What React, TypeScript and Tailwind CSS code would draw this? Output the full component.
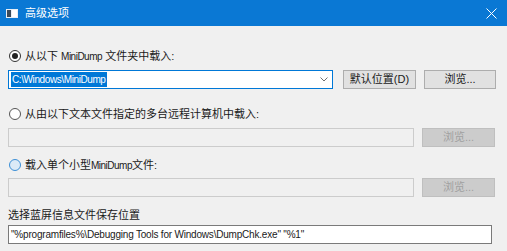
import React from 'react';

const font = { fontFamily: '"Liberation Sans", "Noto Sans CJK SC", sans-serif' };

const Radio = ({ checked, hover }: { checked?: boolean; hover?: boolean }) => (
  <span
    className={`flex h-[12px] w-[12px] shrink-0 items-center justify-center rounded-full border ${
      checked ? 'border-[#333333] bg-white' : hover ? 'border-[#3c8fd6] bg-[#dbeaf7]' : 'border-[#555555] bg-white'
    }`}
  >
    {checked && <span className="h-[6px] w-[6px] rounded-full bg-[#222222]" />}
  </span>
);

const Button = ({ children, disabled, className = '' }: { children: React.ReactNode; disabled?: boolean; className?: string }) => (
  <div
    className={`flex h-[19px] items-center justify-center border text-[11px] ${
      disabled ? 'border-[#bfbfbf] bg-[#cccccc] text-[#a0a0a0]' : 'border-[#adadad] bg-[#e1e1e1] text-[#1a1a1a]'
    } ${className}`}
  >
    {children}
  </div>
);

export default function App() {
  return (
    <div className="h-[251px] w-[507px] overflow-hidden bg-[#f0f0f0] text-[#1a1a1a]" style={font}>
      {/* title bar */}
      <div className="flex h-[26px] items-center bg-[#0a78d4] pl-[6px] pr-[6px] text-white">
        <svg width="12" height="9" viewBox="0 0 12 9" className="shrink-0">
          <rect x="0" y="0" width="12" height="9" fill="#e8eef5" />
          <rect x="1" y="1" width="4" height="7" fill="#3b4a5a" />
          <rect x="6" y="1" width="5" height="7" fill="#ffffff" />
        </svg>
        <span className="ml-[7px] text-[11px]">高级选项</span>
        <svg width="11" height="11" viewBox="0 0 11 11" className="ml-auto mr-[4px]">
          <path d="M0.5 0.5 L10.5 10.5 M10.5 0.5 L0.5 10.5" stroke="#ffffff" strokeWidth="1" />
        </svg>
      </div>

      <div className="pl-[8px] pr-[11px]">
        {/* option 1 */}
        <div className="mt-[22px] flex h-[16px] items-center gap-[4px] pl-[1px] text-[11px]">
          <Radio checked />
          <span>
            从以下 <span className="text-[10px] tracking-[-0.5px]">MiniDump</span> 文件夹中载入:
          </span>
        </div>
        <div className="mt-[6px] flex h-[19px] items-center">
          <div className="flex h-[19px] w-[325px] items-center border border-[#0078d7] bg-white pl-[2px] pr-[4px]">
            <span className="bg-[#0078d7] px-[1px] text-[10px] leading-[15px] tracking-[-0.4px] text-white">C:\Windows\MiniDump</span>
            <svg width="8" height="5" viewBox="0 0 8 5" className="ml-auto">
              <path d="M0.5 0.5 L4 4 L7.5 0.5" stroke="#707070" strokeWidth="1" fill="none" />
            </svg>
          </div>
          <Button className="ml-[10px] w-[73px]">默认位置(D)</Button>
          <Button className="ml-[8px] w-[72px]">浏览...</Button>
        </div>

        {/* option 2 */}
        <div className="mt-[17px] flex h-[16px] items-center gap-[4px] pl-[1px] text-[11px]">
          <Radio />
          <span>从由以下文本文件指定的多台远程计算机中载入:</span>
        </div>
        <div className="mt-[6px] flex h-[19px] items-center">
          <div className="h-[19px] w-[406px] border border-[#cccccc] bg-[#f0f0f0]" />
          <Button disabled className="ml-[8px] w-[73px]">浏览...</Button>
        </div>

        {/* option 3 */}
        <div className="mt-[10px] flex h-[16px] items-center gap-[4px] pl-[1px] text-[11px]">
          <Radio hover />
          <span>
            载入单个小型<span className="text-[10px] tracking-[-0.5px]">MiniDump</span>文件:
          </span>
        </div>
        <div className="mt-[5px] flex h-[19px] items-center">
          <div className="h-[19px] w-[406px] border border-[#cccccc] bg-[#f0f0f0]" />
          <Button disabled className="ml-[8px] w-[73px]">浏览...</Button>
        </div>

        {/* save location */}
        <div className="mt-[10px] flex h-[16px] items-center text-[11px]">选择蓝屏信息文件保存位置</div>
        <div className="mt-[2px] flex h-[19px] w-[484px] items-center border border-[#7a7a7a] bg-white pl-[2px] text-[10px] tracking-[-0.2px]">
          "%programfiles%\Debugging Tools for Windows\DumpChk.exe" "%1"
        </div>
      </div>
    </div>
  );
}
